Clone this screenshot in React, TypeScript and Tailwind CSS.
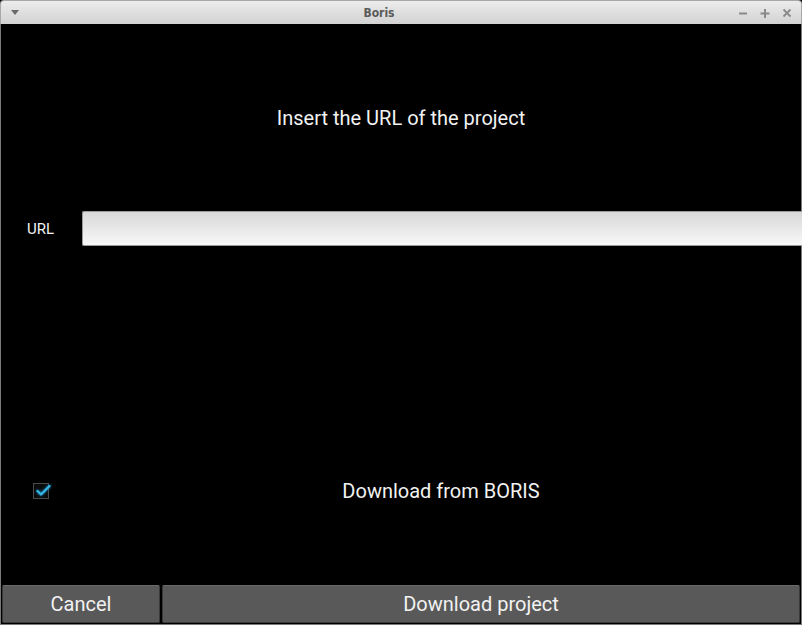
import React from "react";

export default function App() {
  const font = { fontFamily: "Roboto, 'Noto Sans', sans-serif" };
  return (
    <div className="w-[802px] h-[625px] flex flex-col bg-black overflow-hidden" style={font}>
      {/* Title bar */}
      <div className="h-[24px] flex items-center relative rounded-t-[4px] border border-b-0 border-[#a8a8a8] bg-gradient-to-b from-[#ececec] to-[#d2d2d2]">
        <div className="w-0 h-0 ml-[10px] border-l-[4px] border-r-[4px] border-t-[5px] border-l-transparent border-r-transparent border-t-[#6a6a6a]" />
        <div className="flex-1 text-center text-[12px] font-bold text-[#5a5a5a] pl-[2px]" style={{ fontFamily: "'DejaVu Sans Condensed', 'DejaVu Sans', sans-serif" }}>
          Boris
        </div>
        <div className="flex items-center gap-[10px] mr-[8px] text-[#8a8a8a]">
          <svg width="12" height="12" viewBox="0 0 12 12"><path d="M2 6.5h8" stroke="#8a8a8a" strokeWidth="2" /></svg>
          <svg width="12" height="12" viewBox="0 0 12 12"><path d="M1.5 6.5h9M6 2v9" stroke="#8a8a8a" strokeWidth="2" /></svg>
          <svg width="12" height="12" viewBox="0 0 12 12"><path d="M2.5 2.5l7 7M9.5 2.5l-7 7" stroke="#8a8a8a" strokeWidth="1.8" /></svg>
        </div>
      </div>
      {/* Content */}
      <div className="flex-1 flex flex-col bg-black border-l border-r border-b border-[#7a7a7a]">
        <div className="h-[187px] flex items-center justify-center text-[20px] text-[#f2f2f2] pt-[1px]">
          Insert the URL of the project
        </div>
        <div className="h-[35px] flex items-center">
          <div className="w-[81px] pl-[26px] pt-[2px] text-[15px] text-[#f2f2f2]">URL</div>
          <div className="flex-1 h-[35px] border border-[#9a9a9a] border-r-0 rounded-l-[2px] bg-gradient-to-b from-[#d8d8d8] to-[#f8f8f8] mr-[-2px]" />
        </div>
        <div className="h-[227px]" />
        <div className="h-[36px] flex items-center">
          <div className="w-[80px] pl-[32px] flex items-center">
            <div className="relative w-[16px] h-[16px] border border-[#4a4a4a] bg-[#0a0a0a]">
              <svg className="absolute left-[1px] top-[-3px]" width="17" height="17" viewBox="0 0 17 17" style={{ filter: "drop-shadow(0 0 1.5px #1e88c8)" }}>
                <path d="M2.5 10l3.5 3.5L14.5 5" fill="none" stroke="#33b5e5" strokeWidth="2.4" strokeLinecap="round" strokeLinejoin="round" />
              </svg>
            </div>
          </div>
          <div className="flex-1 text-center text-[20px] text-[#f2f2f2]">Download from BORIS</div>
        </div>
        <div className="flex-1" />
        <div className="h-[39px] flex gap-[2px] pl-[1px] pr-[1px] pb-[1px]">
          <button className="w-[158px] h-full bg-[#595959] border border-[#3a3a3a] border-t-[#6a6a6a] rounded-[2px] text-[20px] text-[#f2f2f2] pb-[1px]">
            Cancel
          </button>
          <button className="flex-1 h-full bg-[#595959] border border-[#3a3a3a] border-t-[#6a6a6a] rounded-[2px] text-[20px] text-[#f2f2f2] pb-[1px]">
            Download project
          </button>
        </div>
      </div>
    </div>
  );
}
